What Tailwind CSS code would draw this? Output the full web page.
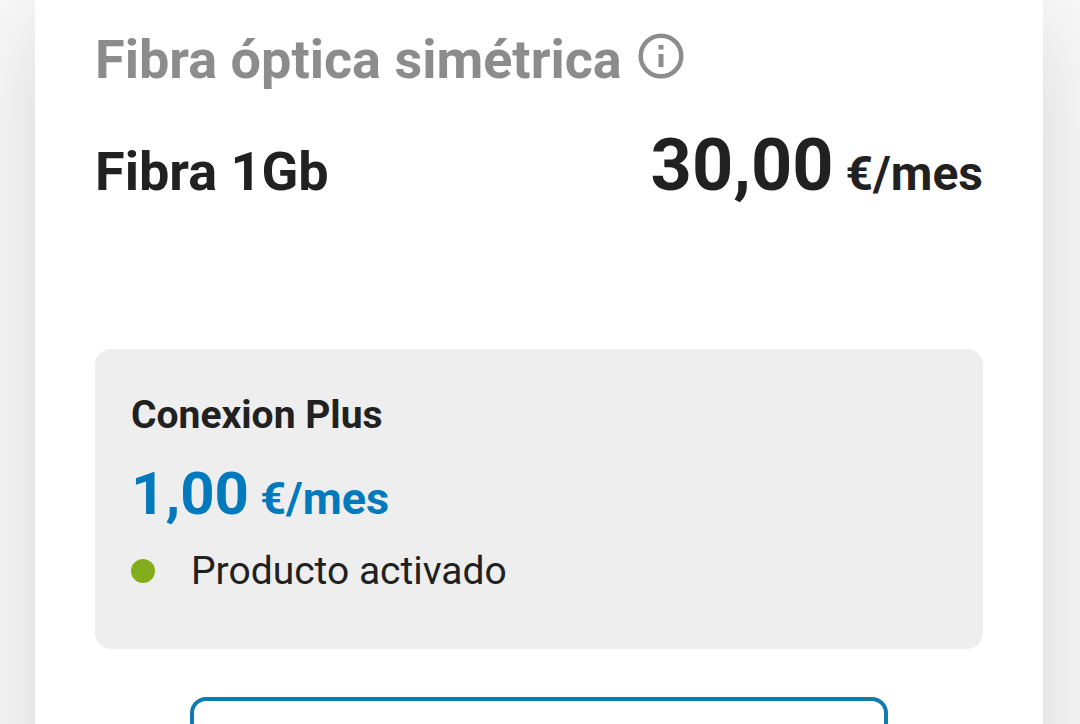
<!DOCTYPE html>
<html lang="es">
<head>
  <meta charset="UTF-8">
  <meta name="viewport" content="width=device-width, initial-scale=1.0">
  <title>Fibra óptica simétrica</title>
  <script src="https://cdn.jsdelivr.net/npm/@tailwindcss/browser@4"></script>
</head>
<body class="h-screen overflow-hidden bg-[#fafafa] font-['Roboto',sans-serif] text-[#212121]">

<main class="ml-[35px] mr-[37px] min-h-screen bg-white px-[60px] pt-7 shadow-[0_16px_100px_rgba(0,0,0,0.15)]">
  <div class="flex items-start gap-4">
    <h1 class="text-[54px] leading-[64px] font-bold text-[#8c8c8c]">Fibra óptica simétrica</h1>
    <button type="button" aria-label="Información" class="mt-1 text-[#8c8c8c]">
      <svg class="size-[46px] overflow-visible" viewBox="0 0 46 46" fill="none" stroke="currentColor" stroke-width="4.5">
        <circle cx="23" cy="24" r="20.3"/>
        <path stroke-width="5" d="M23 22v13M23 13v4.500"/>
      </svg>
    </button>
  </div>

  <div class="mt-8 flex items-baseline justify-between">
    <h2 class="text-[54px] leading-[84px] font-bold">Fibra 1Gb</h2>
    <p class="text-[72px] leading-[84px] font-bold">30,00<span class="text-[48px] leading-none"> €/mes</span></p>
  </div>

  <section class="mt-[135px] rounded-2xl bg-[#eeeeee] px-9 pt-10 pb-[50px]">
    <h3 class="text-[39px] leading-[52px] font-bold">Conexion Plus</h3>
    <p class="mt-2 text-[60px] leading-[90px] font-bold text-[#0079bd]">1,00<span class="text-[45px] leading-none"> €/mes</span></p>
    <p class="mt-1 flex items-center gap-9 text-[39px] leading-[56px]">
      <span class="size-6 rounded-full bg-[#84ad1e]"></span>
      Producto activado
    </p>
  </section>

  <button type="button" aria-label="Gestionar producto" class="mx-auto mt-12 block h-36 w-[698px] max-w-full rounded-2xl border-4 border-[#0f7bb0] bg-white"></button>
</main>

</body>
</html>
